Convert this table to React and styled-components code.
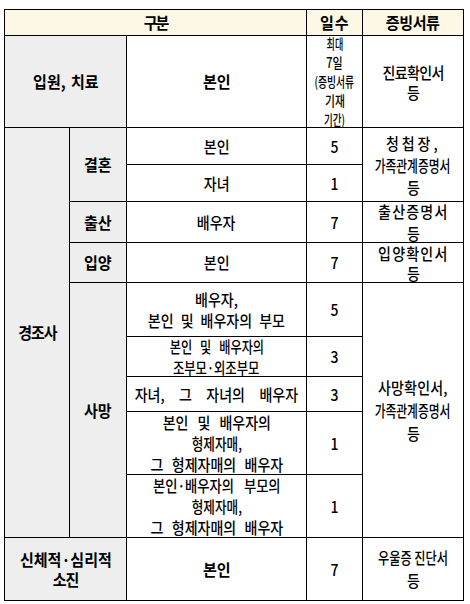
import React from "react";
import styled, { createGlobalStyle } from "styled-components";

const Global = createGlobalStyle`
  html, body { margin: 0; padding: 0; background: #fff; }
  body { font-family: "Noto Sans CJK KR", "Noto Sans", sans-serif; color: #000; }
`;

const Page = styled.div`
  padding: 9px 0 0 4px;
`;

const Table = styled.div`
  display: grid;
  grid-template-columns: 65px 57px 180px 56px 101px;
  grid-template-rows: 26px 92px 37px 37px 41px 40px 54px 40px 35px 63px 63px 63px;
  width: max-content;
  border-top: 1px solid #000;
  border-left: 1px solid #000;
`;

const Cell = styled.div`
  grid-column: ${(p) => p.$col};
  grid-row: ${(p) => p.$row};
  box-sizing: border-box;
  border-right: 1px solid #000;
  border-bottom: 1px solid #000;
  background: ${(p) => (p.$tone === "head" ? "#fdf7e6" : p.$tone === "label" ? "#eeeeee" : "#fff")};
  font-weight: ${(p) => (p.$bold ? 700 : 500)};
  font-size: ${(p) => p.$fs || 16}px;
  line-height: ${(p) => p.$lh || 21}px;
  display: flex;
  flex-direction: column;
  align-items: center;
  justify-content: center;
  overflow: visible;
  min-width: 0;
  min-height: 0;
`;

const Line = styled.span`
  display: block;
  white-space: nowrap;
  letter-spacing: ${(p) => p.$ls || 0}px;
  word-spacing: ${(p) => p.$ws || 0}px;
  transform: scaleX(${(p) => (p.$strong ? 0.94 : 0.875) * (p.$sx || 1)});
`;

const B = (props) => <Line $strong {...props} />;

export default function App() {
  return (
    <>
      <Global />
      <Page>
        <Table>
          {/* header */}
          <Cell $col="1 / 4" $row="1" $tone="head" $bold>
            <B $ls={-2.2}>구분</B>
          </Cell>
          <Cell $col="4" $row="1" $tone="head" $bold>
            <B $ls={1}>일수</B>
          </Cell>
          <Cell $col="5" $row="1" $tone="head" $bold>
            <B $ls={-0.4}>증빙서류</B>
          </Cell>

          {/* 입원, 치료 */}
          <Cell $col="1 / 3" $row="2" $tone="label" $bold>
            <B $ws={2}>입원, 치료</B>
          </Cell>
          <Cell $col="3" $row="2" $bold>
            <B>본인</B>
          </Cell>
          <Cell $col="4" $row="2" $fs={14} $lh={19}>
            <Line $sx={0.74}>최대</Line>
            <Line $sx={0.9}>7일</Line>
            <Line $sx={0.8}>(증빙서류</Line>
            <Line $sx={0.88}>기재</Line>
            <Line $sx={0.78}>기간)</Line>
          </Cell>
          <Cell $col="5" $row="2" $lh={20}>
            <Line $ls={-0.7}>진료확인서</Line>
            <Line>등</Line>
          </Cell>

          {/* 경조사 */}
          <Cell $col="1" $row="3 / 12" $tone="label" $bold>
            <B $ls={-1.1}>경조사</B>
          </Cell>

          {/* 결혼 */}
          <Cell $col="2" $row="3 / 5" $tone="label" $bold>
            <B>결혼</B>
          </Cell>
          <Cell $col="3" $row="3">
            <Line>본인</Line>
          </Cell>
          <Cell $col="4" $row="3">
            <Line>5</Line>
          </Cell>
          <Cell $col="5" $row="3 / 5" $lh={22}>
            <Line $ls={3.4}>청첩장,</Line>
            <Line $sx={0.84}>가족관계증명서</Line>
            <Line>등</Line>
          </Cell>
          <Cell $col="3" $row="4">
            <Line>자녀</Line>
          </Cell>
          <Cell $col="4" $row="4">
            <Line>1</Line>
          </Cell>

          {/* 출산 */}
          <Cell $col="2" $row="5" $tone="label" $bold>
            <B>출산</B>
          </Cell>
          <Cell $col="3" $row="5">
            <Line>배우자</Line>
          </Cell>
          <Cell $col="4" $row="5">
            <Line>7</Line>
          </Cell>
          <Cell $col="5" $row="5" $lh={22}>
            <Line $ls={1.4}>출산증명서</Line>
            <Line>등</Line>
          </Cell>

          {/* 입양 */}
          <Cell $col="2" $row="6" $tone="label" $bold>
            <B>입양</B>
          </Cell>
          <Cell $col="3" $row="6">
            <Line>본인</Line>
          </Cell>
          <Cell $col="4" $row="6">
            <Line>7</Line>
          </Cell>
          <Cell $col="5" $row="6" $lh={20}>
            <Line $ls={1.4}>입양확인서</Line>
            <Line>등</Line>
          </Cell>

          {/* 사망 */}
          <Cell $col="2" $row="7 / 12" $tone="label" $bold>
            <B>사망</B>
          </Cell>
          <Cell $col="3" $row="7">
            <Line>배우자,</Line>
            <Line $ws={4.5}>본인 및 배우자의 부모</Line>
          </Cell>
          <Cell $col="4" $row="7">
            <Line>5</Line>
          </Cell>
          <Cell $col="5" $row="7 / 12" $lh={23}>
            <Line $ls={0.2}>사망확인서,</Line>
            <Line $sx={0.84}>가족관계증명서</Line>
            <Line>등</Line>
          </Cell>

          <Cell $col="3" $row="8" $lh={21}>
            <Line $sx={0.87} $ws={6.8}>본인 및 배우자의</Line>
            <Line $sx={0.88}>조부모·외조부모</Line>
          </Cell>
          <Cell $col="4" $row="8">
            <Line>3</Line>
          </Cell>

          <Cell $col="3" $row="9">
            <Line $ws={12.9}>자녀, 그 자녀의 배우자</Line>
          </Cell>
          <Cell $col="4" $row="9">
            <Line>3</Line>
          </Cell>

          <Cell $col="3" $row="10">
            <Line $ws={6.7}>본인 및 배우자의</Line>
            <Line $sx={0.9}>형제자매,</Line>
            <Line $ws={6}>그 형제자매의 배우자</Line>
          </Cell>
          <Cell $col="4" $row="10">
            <Line>1</Line>
          </Cell>

          <Cell $col="3" $row="11">
            <Line $sx={0.95} $ws={8.3}>본인·배우자의 부모의</Line>
            <Line $sx={0.9}>형제자매,</Line>
            <Line $ws={6}>그 형제자매의 배우자</Line>
          </Cell>
          <Cell $col="4" $row="11">
            <Line>1</Line>
          </Cell>

          {/* 신체적·심리적 소진 */}
          <Cell $col="1 / 3" $row="12" $tone="label" $bold $lh={20}>
            <B>신체적·심리적</B>
            <B $ls={-1.1}>소진</B>
          </Cell>
          <Cell $col="3" $row="12" $bold>
            <B>본인</B>
          </Cell>
          <Cell $col="4" $row="12">
            <Line>7</Line>
          </Cell>
          <Cell $col="5" $row="12" $lh={23}>
            <Line $sx={0.87}>우울증 진단서</Line>
            <Line>등</Line>
          </Cell>
        </Table>
      </Page>
    </>
  );
}
